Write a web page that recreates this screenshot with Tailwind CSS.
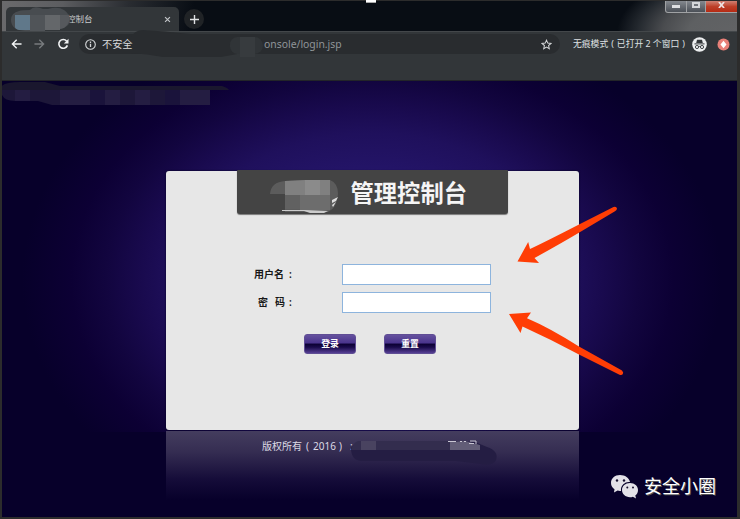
<!DOCTYPE html>
<html lang="zh-CN">
<head>
<meta charset="utf-8">
<title>管理控制台</title>
<script src="https://cdn.jsdelivr.net/npm/@tailwindcss/browser@4"></script>
</head>
<body class="w-[740px] h-[519px] overflow-hidden bg-[#2c2c2c] font-['Noto_Sans','Noto_Sans_CJK_SC',sans-serif]">
<div class="relative w-[740px] h-[519px] pt-px pl-[2px] pr-[3px] pb-[2px] flex flex-col overflow-hidden">

  <!-- Tab strip -->
  <header class="relative h-[30px] shrink-0 flex items-end pl-1 bg-[linear-gradient(100deg,#6a6a6c_0,#5c5d60_60px,#292c31_125px,#080d14_190px)]">
    <div class="absolute inset-0 bg-[radial-gradient(ellipse_120px_62px_at_735px_32px,#626365_0,#5e6062_40%,#4a4c4f_62%,#22272d_84%,transparent_100%)]"></div>
    <div class="relative w-[173px] h-6 rounded-t-[5px] bg-[#323639] flex items-center justify-between pl-[61px] pr-[8px]">
      <span class="text-[8.5px] leading-none text-[#c9cbcd] whitespace-nowrap">控制台</span>
      <svg class="size-[7px]" viewBox="0 0 8 8" stroke="#c2c5c8" stroke-width="1.3"><path d="M1.2 1.2 6.8 6.8M6.8 1.2 1.2 6.8"/></svg>
    </div>
    <div class="relative size-5 rounded-full bg-[#202326] ml-[5px] mb-[2px] flex items-center justify-center">
      <svg class="size-[9px]" viewBox="0 0 9 9" stroke="#e0e2e4" stroke-width="1.4"><path d="M4.5 0v9M0 4.5h9"/></svg>
    </div>
    <div class="absolute right-0 top-0 w-[72px] h-[12px] pl-px pb-px flex gap-px bg-[#a0a2a4] rounded-bl-[3px]">
      <div class="w-5 rounded-bl-[2px] bg-linear-to-b from-[#85898f] to-[#4b5057] flex items-center justify-center"><div class="w-[8px] h-[3px] bg-[#dfe0e2]"></div></div>
      <div class="w-[18px] bg-linear-to-b from-[#85898f] to-[#4b5057] flex justify-center pt-px"><div class="w-[8px] h-[6px] border-2 border-[#d5d7da]"></div></div>
      <div class="flex-1 bg-linear-to-b from-[#cf8072] via-[#bd3f28] to-[#b52a13] flex items-start justify-center pt-px">
        <svg class="w-[7px] h-[6px]" viewBox="0 0 8 7" stroke="#eee3e3" stroke-width="2"><path d="m1 0 6 7M7 0 1 7"/></svg>
      </div>
    </div>
    <svg class="absolute left-[8px] top-[4px] w-[64px] h-[28px]" viewBox="0 0 64 28">
      <path d="M1 15Q1 8 9 6Q12 5 20 5Q24 0 33 4L38 4Q48 1 54 5Q60 9 60 16Q58 24 45 25H28Q22 28 15 26Q1 25 1 15" fill="#484c50"/>
      <path d="M5 10h15v15H9q-4-1-4-3z" fill="#60788a"/><path d="M20 10h15v16H20z" fill="#505458"/><path d="M35 10h15v15H35z" fill="#64676a"/><path d="M50 10h9q2 8-5 13l-4 1z" fill="#56595d"/>
    </svg>
  </header>

  <!-- Toolbar -->
  <nav class="relative h-[50px] shrink-0 bg-[#323639] border-t border-[#43474a] border-b border-b-[#232528] pt-[2px]">
    <div class="flex items-center h-5">
      <svg class="ml-[9px] w-[11px] h-[12px]" viewBox="0 0 12 12" fill="none" stroke="#f1f3f4" stroke-width="1.5"><path d="M11.5 6H2M6.2 1.3 1.5 6l4.7 4.7"/></svg>
      <svg class="ml-[12px] w-[11px] h-[12px]" viewBox="0 0 12 12" fill="none" stroke="#787b7e" stroke-width="1.5"><path d="M.5 6H10M5.8 1.3 10.5 6l-4.7 4.7"/></svg>
      <svg class="ml-[12px] w-[12px] h-[12px]" viewBox="0 0 12 12"><path d="M9.6 3A4.4 4.4 0 1 0 10.4 7.4" fill="none" stroke="#f1f3f4" stroke-width="1.6"/><path d="M11.5.8v4.6H6.9z" fill="#f1f3f4"/></svg>
      <div class="relative ml-[10px] w-[481px] h-5 rounded-full bg-[#292c2f] flex items-center">
        <svg class="absolute left-[52px] top-[-4px] w-[115px] h-[27px]" viewBox="0 0 115 27"><path d="M0 7Q4 0 12 0Q32 1 60 4H112V23L90 27H32Q16 24 0 23z" fill="#292c2f"/></svg>
        <div class="absolute left-[151px] top-[3px] w-[33px] h-[17px] rounded-r-[9px] rounded-l-[8px] bg-[#303437]"></div>
        <div class="absolute left-[161px] top-[3px] w-[15px] h-[20px] bg-[#373b3e]"></div>
        <svg class="relative ml-[6px] size-[11px] shrink-0" viewBox="0 0 11 11" fill="none" stroke="#d5d7d9"><circle cx="5.5" cy="5.5" r="4.8" stroke-width="1.1"/><path d="M5.5 4.8v3.3M5.5 2.6v1.3" stroke-width="1.3"/></svg>
        <span class="relative ml-[6px] w-[162px] shrink-0 text-[10.2px] leading-5 text-[#d8dadc] whitespace-nowrap">不安全</span>
        <span class="relative w-[190px] text-[10.4px] leading-5 text-[#909599] whitespace-nowrap">onsole/login.jsp</span>
        <svg class="ml-auto mr-[8px] size-[11px]" viewBox="0 0 24 24" fill="none" stroke="#d5d7d9" stroke-width="2.2"><path d="m12 2.5 2.8 6.4 7 .7-5.3 4.6 1.6 6.9L12 17.5l-6.1 3.6 1.6-6.9-5.3-4.6 7-.7z"/></svg>
      </div>
      <span class="ml-[13px] w-[113px] shrink-0 flex text-[8.8px] leading-[21px] text-[#dfe1e3] whitespace-nowrap"><span>无痕模式</span><span class="px-[3px]">(</span><span>已打开 2 个窗口</span><span class="pl-[3px]">)</span></span>
      <svg class="ml-[6px] size-[15px] shrink-0" viewBox="0 0 15 15"><circle cx="7.5" cy="7.5" r="7.3" fill="#eceeef"/><path d="M5 2.7h5l.8 3.2H4.2z" fill="#323639"/><path d="M2.5 6.9h10" stroke="#323639" stroke-width="1"/><g fill="none" stroke="#323639" stroke-width=".9"><circle cx="5" cy="10" r="1.6"/><circle cx="10" cy="10" r="1.6"/><path d="M6.6 9.7q.9-.5 1.8 0"/></g></svg>
      <svg class="ml-[10px] size-[13px] shrink-0" viewBox="0 0 13 13"><circle cx="6.5" cy="6.5" r="6" fill="#e88078"/><path d="m6.5 2.7 3 3.8-3 3.8-3-3.8z" fill="#fff"/></svg>
    </div>
  </nav>

  <!-- Login page -->
  <main class="relative flex-1 bg-[#07002a] overflow-hidden flex flex-col items-center">
    <div class="absolute inset-x-0 top-0 h-[351px] bg-[radial-gradient(ellipse_350px_262px_at_370px_199px,#26166d_0%,#241569_40%,#1f105c_56%,#190a4e_66%,#12053f_76%,#0c0034_86%,#07002a_100%)]"></div>
    <svg class="absolute left-[-2px] top-0 w-[230px] h-[25px]" viewBox="0 0 230 25">
      <path d="M0 9Q0 1 20 1H45L60 5H222Q228 7 229 9z" fill="#1a172e"/>
      <path d="M1 9H210V24H52L38 20H15Q1 20 1 9" fill="#1d1739"/>
      <g fill="#241d42"><path d="M15 9h15v11H15zM60 9h30v15H60zM105 9h15v15h-15zM135 9h15v15h-15zM180 9h30v15h-30z"/></g><path d="M90 9h15v15H90zM165 9h15v15h-15z" fill="#1a133b"/>
    </svg>

    <section class="relative mt-[90px] ml-[6px] w-[413px] h-[259px] shrink-0 rounded-[3px] bg-[#e7e7e7] shadow-[0_0_2px_#00001a] flex flex-col items-center">
      <h1 class="relative -mt-px -ml-px w-[271px] h-[44px] shrink-0 rounded-b-[3px] rounded-t-[1px] bg-[#444] shadow-[0_1px_1px_#777] pl-[114px] text-[23.3px] leading-[47px] font-bold text-[#f5f5f5] whitespace-nowrap">管理控制台
        <svg class="absolute left-[33px] top-[10px] w-[70px] h-[34px]" viewBox="0 0 70 34">
          <path d="M0 14Q1 2 15 1L40 0H60Q68 3 68 14Q67 28 58 32H15V14z" fill="#5c5c5c"/>
          <path d="M15 1 35 0V15H15zM50 0h10v15H50z" fill="#808080"/><path d="M35 0h15v15H35z" fill="#8b8b8b"/><path d="M15 15h15v14H15z" fill="#616161"/><path d="M30 15h30v15H30z" fill="#6d6d6d"/>
          <path d="M12 30H35L58 31 54 33H40L34 31H12z" fill="#ccc"/><path d="m62 20 6-3-2 4-4 2zm0 5 4-3-3 5z" fill="#ddd"/>
        </svg>
      </h1>
      <form class="w-full mt-[50px] text-[10px] font-semibold text-[#181818]">
        <div class="flex items-center h-[21px]">
          <label for="u" class="pl-[88px] w-[176px] shrink-0 whitespace-nowrap">用户名<span class="pl-[5px]">:</span></label>
          <input id="u" class="w-[149px] h-[21px] border border-[#8db4dd] bg-white">
        </div>
        <div class="flex items-center h-[21px] mt-[7px]">
          <label for="p" class="pl-[92px] w-[176px] shrink-0 whitespace-nowrap">密<span class="pl-[7px]">码</span><span class="pl-[4px]">:</span></label>
          <input id="p" type="password" class="w-[149px] h-[21px] border border-[#8db4dd] bg-white">
        </div>
        <div class="flex gap-[28px] pl-[138px] mt-[21px] text-[8.8px] font-bold text-white">
          <button type="button" class="w-[52px] h-5 rounded-[3px] border border-[#604e95] bg-[linear-gradient(#65519e_0,#49338c_45%,#0b0033_50%,#1a0b4b_68%,#563f94_100%)] leading-none">登录</button>
          <button type="button" class="w-[52px] h-5 rounded-[3px] border border-[#604e95] bg-[linear-gradient(#65519e_0,#49338c_45%,#0b0033_50%,#1a0b4b_68%,#563f94_100%)] leading-none">重置</button>
        </div>
      </form>
    </section>

    <footer class="relative ml-[6px] mt-px w-[413px] h-[69px] shrink-0 bg-[linear-gradient(#443d5e,#352d52_30%,#150c39_70%,#07002a)] pl-[96px] text-[10px] leading-[31px] text-[#dcdae5] whitespace-nowrap">
      <div>版权所有<span class="px-[4px]">(</span>2016<span class="px-[3px]">)</span><span class="pl-[5px]">:</span></div>
      <svg class="absolute left-[185px] top-[6px] w-[148px] h-[30px]" viewBox="0 0 148 30">
        <path d="M0 11Q4 5 12 4H104L124 5 136 10Q148 14 145 23Q142 29 130 27L105 24H10Q0 23 0 11" fill="#241d43"/>
        <path d="M7 4h97v9H0q2-7 7-9" fill="#332d4e"/><path d="M10 4h15v9H10z" fill="#494360"/><path d="M99 5l15-1 15 4v5H99z" fill="#625d77"/>
        <path d="M97 4.5h8M109 4.5h2M113 4.5h2M119 4h6v3M118 6.5h5" fill="none" stroke="#c9c6d3"/>
      </svg>
    </footer>
  </main>

  <!-- Annotations -->
  <div class="absolute left-[366px] top-0 w-[10px] h-[3px] bg-white border-b border-[#aaa]"></div>
  <svg class="absolute left-[495px] top-[195px] w-[150px] h-[190px]" viewBox="0 0 150 190" fill="#ff3d05">
    <path d="M22.5 66.5 33.2 47 35 54Q50 47 84 29.5L118.5 12Q121.5 11.2 122 13.5Q122 15 120 16.300L86 36.5Q65 49 39.500 63L44 68z"/>
    <path d="M14 119 36 117.5 32 123.2Q55 133 84 151.5L127 175.5Q129 177.5 127.7 179.3Q126.5 180.7 124 179.5L83 159Q55 144 27.5 131.5L25.5 138z"/>
  </svg>

  <!-- Watermark -->
  <div class="absolute left-[610px] top-[472px] flex items-center">
    <svg class="w-[29px] h-[27px]" viewBox="0 0 29 27">
      <path d="M10 2C4.8 2 1 5.4 1 10c0 2.7 1.3 4.8 3.5 6.200L4 19.500l3.600-1.900c1.200.4 2.400.4 3.400.3A8 8 0 0 1 20 9C19.200 4.800 15 2 10 2" fill="#e3e1e8"/>
      <path d="M20 10c-4.600 0-8 3.100-8 7s3.400 7.200 8 7.200c1 0 2-.1 2.900-.5L26 25.500l-.7-2.900C27 21.300 28 19.300 28 17c0-3.900-3.400-7-8-7" fill="#e3e1e8"/>
      <g fill="#17102f"><circle cx="7" cy="7.5" r="1.2"/><circle cx="14" cy="7.5" r="1.2"/><circle cx="17.3" cy="14.5" r="1"/><circle cx="23" cy="14.5" r="1"/></g>
    </svg>
    <span class="ml-[5px] text-[18px] leading-[28px] text-white whitespace-nowrap [text-shadow:1px_1px_0_#555]">安全小圈</span>
  </div>
</div>
</body>
</html>
